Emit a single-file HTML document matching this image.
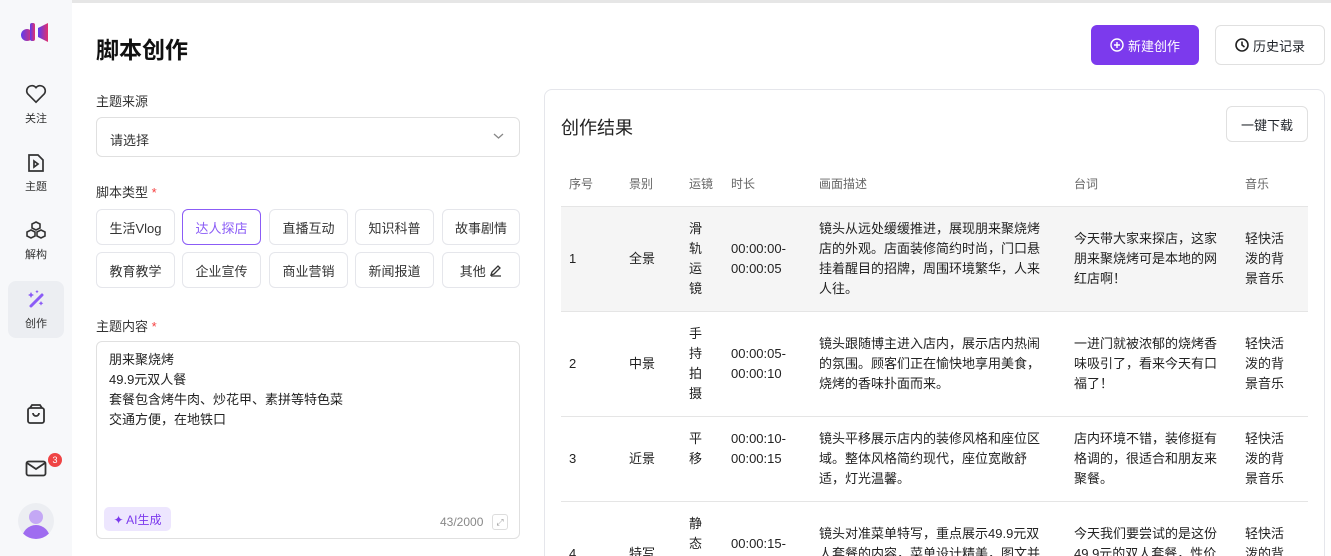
<!DOCTYPE html>
<html style="width:1331px;height:556px;overflow:hidden"><head><meta charset="utf-8"><style>
*{box-sizing:border-box;margin:0;padding:0}
body{width:1331px;height:556px;overflow:hidden;background:#fff;font-family:"Liberation Sans","Noto Sans CJK SC",sans-serif;color:#1f2329;position:relative}
.a{position:absolute}
.side{left:0;top:0;width:72px;height:556px;background:#f7f8fa}
.nav{left:0;width:72px;text-align:center;font-size:11px;color:#333}
.tag{position:absolute;height:36px;border:1px solid #e5e6eb;border-radius:6px;font-size:13px;display:flex;align-items:center;justify-content:center;color:#333;background:#fff}
.lbl{font-size:13px;color:#333}
.star{color:#f53f3f}
.c{position:absolute;font-size:13px;line-height:20px;color:#222}
.h{position:absolute;font-size:12px;color:#666;top:175px}
</style></head><body>
<div class="a" style="left:0;top:0;width:1331px;height:3px;background:#e6e6e6"></div>
<div class="a side"></div>
<svg class="a" style="left:20px;top:22px" width="32" height="22" viewBox="0 0 32 22"><defs><linearGradient id="g" x1="0" x2="1"><stop offset="0" stop-color="#5b3cf0"/><stop offset="1" stop-color="#e3306c"/></linearGradient></defs><circle cx="7" cy="13" r="6" fill="url(#g)"/><rect x="10" y="1" width="5" height="18" rx="2" fill="url(#g)"/><path d="M18 6 L28 1 V20 L18 15Z" fill="url(#g)"/></svg>
<svg class="a" style="left:25px;top:84px" width="22" height="20" viewBox="0 0 24 22" fill="none" stroke="#333" stroke-width="1.8"><path d="M12 20 L3 11 A5 5 0 0 1 12 4 A5 5 0 0 1 21 11Z"/></svg>
<div class="a nav" style="top:110px">关注</div>
<svg class="a" style="left:27px;top:153px" width="18" height="20" viewBox="0 0 18 20" fill="none" stroke="#333" stroke-width="1.7"><path d="M2 2h9l5 5v11H2z"/><path d="M7 8l4 3-4 3z"/></svg>
<div class="a nav" style="top:178px">主题</div>
<svg class="a" style="left:25px;top:220px" width="22" height="22" viewBox="0 0 22 22" fill="none" stroke="#333" stroke-width="1.6"><path d="M11 2l4 2v4l-4 2-4-2V4z"/><path d="M6 10l4 2v4l-4 2-4-2v-4z"/><path d="M16 10l4 2v4l-4 2-4-2v-4z"/></svg>
<div class="a nav" style="top:246px">解构</div>
<div class="a" style="left:8px;top:281px;width:56px;height:57px;background:#eceef2;border-radius:8px"></div>
<svg class="a" style="left:26px;top:289px" width="20" height="20" viewBox="0 0 20 20"><path d="M5 17L16 6" stroke="#8b5cf6" stroke-width="3" stroke-linecap="round"/><path d="M5 3l1 2 2 1-2 1-1 2-1-2-2-1 2-1z M15 12l.8 1.5 1.5.8-1.5.8-.8 1.5-.8-1.5-1.5-.8 1.5-.8z M11 1l.6 1 1 .6-1 .6-.6 1-.6-1-1-.6 1-.6z" fill="#8b5cf6"/></svg>
<div class="a nav" style="top:315px">创作</div>
<svg class="a" style="left:26px;top:403px" width="20" height="22" viewBox="0 0 20 22" fill="none" stroke="#333" stroke-width="1.8"><rect x="2" y="5" width="16" height="15" rx="2"/><path d="M4 5l2-3h8l2 3"/><path d="M7 10a3 3 0 0 0 6 0"/></svg>
<svg class="a" style="left:25px;top:460px" width="22" height="17" viewBox="0 0 22 17" fill="none" stroke="#333" stroke-width="1.8"><rect x="1.5" y="1.5" width="19" height="14" rx="2"/><path d="M2 3l9 6 9-6"/></svg>
<div class="a" style="left:48px;top:453px;width:14px;height:14px;border-radius:7px;background:#ef4444;color:#fff;font-size:9px;text-align:center;line-height:14px">3</div>
<div class="a" style="left:18px;top:503px;width:36px;height:36px;border-radius:18px;background:#eceef2;overflow:hidden"><div class="a" style="left:11px;top:7px;width:14px;height:14px;border-radius:7px;background:#c4a8f5"></div><div class="a" style="left:4px;top:22px;width:28px;height:20px;border-radius:14px 14px 0 0;background:#9f6cf0"></div></div>

<div class="a" style="left:96px;top:31px;font-size:23px;font-weight:bold;color:#111">脚本创作</div>
<div class="a" style="left:1091px;top:25px;width:108px;height:40px;background:#7c3aed;border-radius:6px;color:#fff;font-size:13px;display:flex;align-items:center;justify-content:center;gap:4px"><svg width="14" height="14" viewBox="0 0 14 14" fill="none" stroke="#fff" stroke-width="1.4"><circle cx="7" cy="7" r="6"/><path d="M7 4v6M4 7h6"/></svg>新建创作</div>
<div class="a" style="left:1215px;top:25px;width:110px;height:40px;border:1px solid #e0e0e0;border-radius:6px;font-size:13px;display:flex;align-items:center;justify-content:center;gap:4px"><svg width="14" height="14" viewBox="0 0 14 14" fill="none" stroke="#222" stroke-width="1.6"><circle cx="7" cy="7" r="6"/><path d="M7 3.5V7l2.5 2"/></svg>历史记录</div>

<div class="a lbl" style="left:96px;top:91px">主题来源</div>
<div class="a" style="left:96px;top:117px;width:424px;height:40px;border:1px solid #e0e0e0;border-radius:6px;font-size:13px;padding:12px 13px;color:#333">请选择</div>
<svg class="a" style="left:493px;top:132px" width="11" height="8" viewBox="0 0 11 8" fill="none" stroke="#888" stroke-width="1.3"><path d="M1 2l4.5 4L10 2"/></svg>
<div class="a lbl" style="left:96px;top:182px">脚本类型 <span class="star">*</span></div>
<div class="tag" style="left:96px;top:209px;width:79px">生活Vlog</div>
<div class="tag" style="left:182px;top:209px;width:79px;border-color:#8b5cf6;color:#8b5cf6">达人探店</div>
<div class="tag" style="left:269px;top:209px;width:79px">直播互动</div>
<div class="tag" style="left:355px;top:209px;width:79px">知识科普</div>
<div class="tag" style="left:442px;top:209px;width:78px">故事剧情</div>
<div class="tag" style="left:96px;top:252px;width:79px">教育教学</div>
<div class="tag" style="left:182px;top:252px;width:79px">企业宣传</div>
<div class="tag" style="left:269px;top:252px;width:79px">商业营销</div>
<div class="tag" style="left:355px;top:252px;width:79px">新闻报道</div>
<div class="tag" style="left:442px;top:252px;width:78px">其他&nbsp;<svg width="13" height="13" viewBox="0 0 13 13" fill="none" stroke="#333" stroke-width="1.3"><path d="M2 11l1-3 6-6 2 2-6 6zM2 12h10"/></svg></div>
<div class="a lbl" style="left:96px;top:316px">主题内容 <span class="star">*</span></div>
<div class="a" style="left:96px;top:341px;width:424px;height:198px;border:1px solid #e0e0e0;border-radius:6px"></div>
<div class="a" style="left:109px;top:350px;font-size:13px;line-height:20px;color:#222">朋来聚烧烤<br>49.9元双人餐<br>套餐包含烤牛肉、炒花甲、素拼等特色菜<br>交通方便，在地铁口</div>
<div class="a" style="left:104px;top:507px;width:67px;height:24px;background:#ede6fe;border-radius:5px;font-size:12px;color:#7c3aed;display:flex;align-items:center;justify-content:center;gap:3px">✦ AI生成</div>
<div class="a" style="left:440px;top:515px;font-size:12px;color:#888">43/2000</div>
<div class="a" style="left:492px;top:514px;width:16px;height:16px;border:1px solid #ddd;border-radius:3px;font-size:9px;color:#999;text-align:center;line-height:14px">⤢</div>

<div class="a" style="left:544px;top:89px;width:781px;height:500px;border:1px solid #e5e6eb;border-radius:8px"></div>
<div class="a" style="left:561px;top:114px;font-size:18px;color:#222">创作结果</div>
<div class="a" style="left:1226px;top:106px;width:82px;height:36px;border:1px solid #e0e0e0;border-radius:6px;font-size:13px;display:flex;align-items:center;justify-content:center">一键下载</div>
<div class="h" style="left:569px">序号</div><div class="h" style="left:629px">景别</div><div class="h" style="left:689px">运镜</div><div class="h" style="left:731px">时长</div><div class="h" style="left:819px">画面描述</div><div class="h" style="left:1074px">台词</div><div class="h" style="left:1245px">音乐</div>
<div class="a" style="left:561px;top:206px;width:747px;height:105px;background:#f5f5f5"></div>
<div class="a" style="left:561px;top:206px;width:747px;height:1px;background:#e5e5e5"></div>
<div class="a" style="left:561px;top:311px;width:747px;height:1px;background:#e5e5e5"></div>
<div class="a" style="left:561px;top:416px;width:747px;height:1px;background:#e5e5e5"></div>
<div class="a" style="left:561px;top:501px;width:747px;height:1px;background:#e5e5e5"></div>

<div class="c" style="left:569px;top:249px">1</div><div class="c" style="left:629px;top:249px">全景</div><div class="c" style="left:689px;top:219px;width:16px">滑轨运镜</div><div class="c" style="left:731px;top:239px">00:00:00-<br>00:00:05</div><div class="c" style="left:819px;top:219px;width:228px">镜头从远处缓缓推进，展现朋来聚烧烤店的外观。店面装修简约时尚，门口悬挂着醒目的招牌，周围环境繁华，人来人往。</div><div class="c" style="left:1074px;top:229px;width:150px">今天带大家来探店，这家朋来聚烧烤可是本地的网红店啊！</div><div class="c" style="left:1245px;top:229px;width:42px">轻快活泼的背景音乐</div>

<div class="c" style="left:569px;top:354px">2</div><div class="c" style="left:629px;top:354px">中景</div><div class="c" style="left:689px;top:324px;width:16px">手持拍摄</div><div class="c" style="left:731px;top:344px">00:00:05-<br>00:00:10</div><div class="c" style="left:819px;top:334px;width:228px">镜头跟随博主进入店内，展示店内热闹的氛围。顾客们正在愉快地享用美食，烧烤的香味扑面而来。</div><div class="c" style="left:1074px;top:334px;width:150px">一进门就被浓郁的烧烤香味吸引了，看来今天有口福了！</div><div class="c" style="left:1245px;top:334px;width:42px">轻快活泼的背景音乐</div>

<div class="c" style="left:569px;top:449px">3</div><div class="c" style="left:629px;top:449px">近景</div><div class="c" style="left:689px;top:429px;width:16px">平移</div><div class="c" style="left:731px;top:429px">00:00:10-<br>00:00:15</div><div class="c" style="left:819px;top:429px;width:228px">镜头平移展示店内的装修风格和座位区域。整体风格简约现代，座位宽敞舒适，灯光温馨。</div><div class="c" style="left:1074px;top:429px;width:150px">店内环境不错，装修挺有格调的，很适合和朋友来聚餐。</div><div class="c" style="left:1245px;top:429px;width:42px">轻快活泼的背景音乐</div>

<div class="c" style="left:569px;top:544px">4</div><div class="c" style="left:629px;top:544px">特写</div><div class="c" style="left:689px;top:514px;width:16px">静态镜头</div><div class="c" style="left:731px;top:534px">00:00:15-<br>00:00:20</div><div class="c" style="left:819px;top:524px;width:228px">镜头对准菜单特写，重点展示49.9元双人套餐的内容，菜单设计精美，图文并茂。</div><div class="c" style="left:1074px;top:524px;width:150px">今天我们要尝试的是这份49.9元的双人套餐，性价比超高！</div><div class="c" style="left:1245px;top:524px;width:42px">轻快活泼的背景音乐</div>
</body></html>
